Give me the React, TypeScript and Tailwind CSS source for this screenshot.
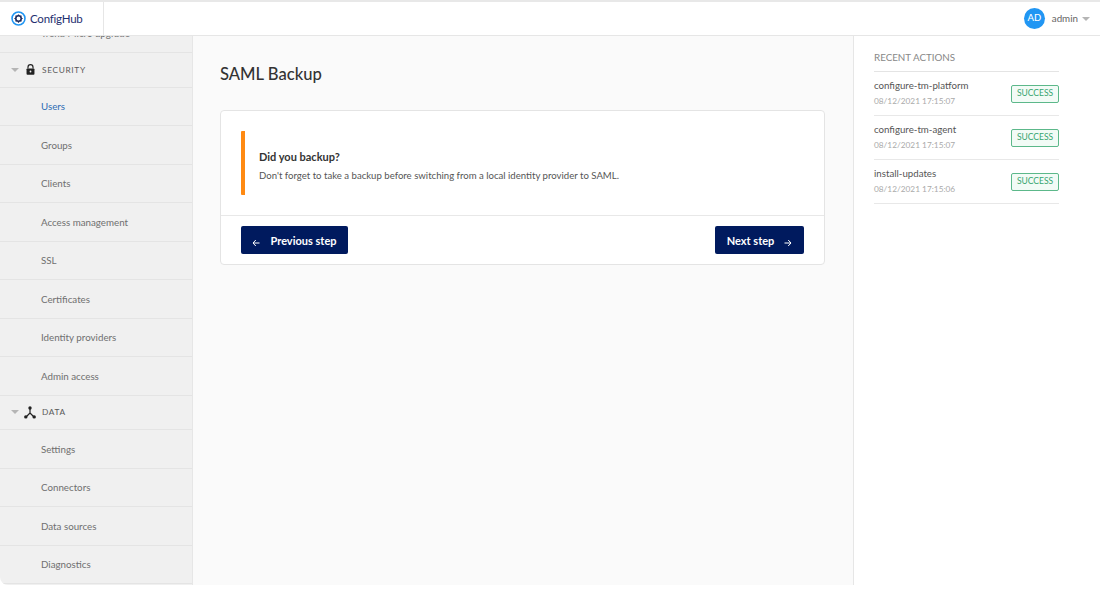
const securityItems = ['Users', 'Groups', 'Clients', 'Access management', 'SSL', 'Certificates', 'Identity providers', 'Admin access'];
const dataItems = ['Settings', 'Connectors', 'Data sources', 'Diagnostics'];

const actions = [
  { name: 'configure-tm-platform', time: '08/12/2021 17:15:07' },
  { name: 'configure-tm-agent', time: '08/12/2021 17:15:07' },
  { name: 'install-updates', time: '08/12/2021 17:15:06' },
];

function Caret() {
  return <span className="block h-0 w-0 border-x-[4px] border-t-[4px] border-x-transparent border-t-[#b5b5b5]" />;
}

function Logo() {
  return (
    <svg width="15" height="15" viewBox="0 0 16 16" className="shrink-0">
      <circle cx="8" cy="8" r="6.9" fill="none" stroke="#2196f3" strokeWidth="1.7" />
      <circle cx="8" cy="8" r="2.9" fill="none" stroke="#1c2b5e" strokeWidth="1.7" />
      <g stroke="#1c2b5e" strokeWidth="1.3">
        <path d="M8 3.6v1.6M8 10.8v1.6M3.6 8h1.6M10.8 8h1.6M4.9 4.9l1.1 1.1M10 10l1.1 1.1M4.9 11.1L6 10M10 6l1.1-1.1" />
      </g>
    </svg>
  );
}

function LockIcon() {
  return (
    <svg width="9" height="11" viewBox="0 0 10 12">
      <path d="M2.2 5V3.4a2.8 2.8 0 0 1 5.6 0V5" fill="none" stroke="#222" strokeWidth="1.3" />
      <rect x="0.6" y="4.8" width="8.8" height="7" rx="1" fill="#222" />
      <circle cx="5" cy="8.2" r="1" fill="#f0f0f0" />
    </svg>
  );
}

function NetworkIcon() {
  return (
    <svg width="12" height="13" viewBox="0 0 12 13">
      <path d="M6 2.5v4.5M6 7L2 11M6 7l4 4" fill="none" stroke="#222" strokeWidth="1.2" />
      <circle cx="6" cy="2" r="1.7" fill="#222" />
      <circle cx="1.8" cy="10.9" r="1.7" fill="#222" />
      <circle cx="10.2" cy="10.9" r="1.7" fill="#222" />
    </svg>
  );
}

function ArrowIcon({ left }: { left?: boolean }) {
  return (
    <svg width="8" height="8" viewBox="0 0 8 8" className="mt-[4px]">
      <path
        d={left ? 'M7.5 4H1M3.8 1L1 4l2.8 3' : 'M.5 4H7M4.2 1L7 4 4.2 7'}
        fill="none"
        stroke="#fff"
        strokeWidth="1"
      />
    </svg>
  );
}

function SectionRow({ label, icon }: { label: string; icon: React.ReactNode }) {
  return (
    <div className="flex h-[34.5px] items-center border-b border-[#e4e4e4] pl-[11px]">
      <Caret />
      <div className="ml-[5px] flex w-[12px] justify-center">{icon}</div>
      <span className="ml-[6px] text-[8.3px] tracking-[0.08em] text-[#5a5a5a]">{label}</span>
    </div>
  );
}

function NavRow({ label, active }: { label: string; active?: boolean }) {
  return (
    <div className={`flex h-[38.5px] shrink-0 items-center border-b border-[#e4e4e4] pt-[1px] pl-[41px] text-[9.75px] ${active ? 'text-[#2f6db5]' : 'text-[#6f6f6f]'}`}>
      {label}
    </div>
  );
}

export default function App() {
  return (
    <div className="h-[589px] w-[1100px] overflow-hidden bg-white font-['Lato',sans-serif]">
      <div className="flex h-[585px] flex-col overflow-hidden rounded-b-lg border-t-2 border-[#e8e8e8] bg-white">
        {/* Top bar */}
        <header className="z-10 flex h-[34px] shrink-0 items-center border-b border-[#e6e6e6] bg-white">
          <div className="flex h-full w-[104px] items-center gap-[4px] border-r border-[#e6e6e6] pl-[11px]">
            <Logo />
            <span className="text-[11.5px] tracking-[-0.02em] text-[#1f3070]">ConfigHub</span>
          </div>
          <div className="ml-auto flex items-center pr-[10px]">
            <div className="flex h-[21px] w-[21px] items-center justify-center rounded-full bg-[#2196f3] text-[9.5px] font-medium text-white">AD</div>
            <span className="ml-[7px] text-[9.8px] text-[#666]">admin</span>
            <span className="ml-[4px]"><Caret /></span>
          </div>
        </header>

        <div className="flex min-h-0 flex-1">
          {/* Sidebar */}
          <aside className="flex w-[193px] shrink-0 flex-col overflow-hidden border-r border-[#e6e6e6] bg-[#f0f0f0]">
            <div className="-mt-[21.5px]">
              <NavRow label="Trend Micro upgrade" />
              <SectionRow label="SECURITY" icon={<LockIcon />} />
              {securityItems.map((item) => (
                <NavRow key={item} label={item} active={item === 'Users'} />
              ))}
              <SectionRow label="DATA" icon={<NetworkIcon />} />
              {dataItems.map((item) => (
                <NavRow key={item} label={item} />
              ))}
            </div>
          </aside>

          {/* Main content */}
          <main className="flex-1 bg-[#fafafa] px-[27px] pt-[27px]">
            <h1 className="text-[16.6px] leading-[22px] font-medium text-[#333]">SAML Backup</h1>
            <div className="mt-[25px] h-[155px] w-[605px] rounded border border-[#e4e4e4] bg-white">
              <div className="h-[105px] border-b border-[#e8e8e8] pt-[20px] pl-[20px]">
                <div className="flex h-[64px] flex-col justify-center rounded-[1px] border-l-[4px] border-[#ff8a12] pt-[5px] pl-[14px]">
                  <div className="text-[11px] leading-[15px] font-bold text-[#333]">Did you backup?</div>
                  <div className="mt-[5px] text-[9.6px] leading-[14px] text-[#555]">Don't forget to take a backup before switching from a local identity provider to SAML.</div>
                </div>
              </div>
              <div className="flex justify-between px-[20px] pt-[10px]">
                <button className="flex h-[28px] w-[107px] items-center justify-center gap-[10px] rounded-[2px] bg-[#001a5e] pt-[2px] text-[11px] font-bold text-white">
                  <ArrowIcon left />
                  Previous step
                </button>
                <button className="flex h-[28px] w-[89px] items-center justify-center gap-[10px] rounded-[2px] bg-[#001a5e] pt-[2px] text-[11px] font-bold text-white">
                  Next step
                  <ArrowIcon />
                </button>
              </div>
            </div>
          </main>

          {/* Recent actions */}
          <aside className="w-[247px] shrink-0 border-l border-[#e6e6e6] bg-white pt-[14px] pr-[41px] pl-[20px]">
            <div className="border-b border-[#e4e4e4] pb-[7px] text-[9.8px] leading-[14px] text-[#888]">RECENT ACTIONS</div>
            {actions.map((action) => (
              <div key={action.name} className="flex h-[44px] items-center justify-between border-b border-[#e8e8e8]">
                <div className="-mt-[2px]">
                  <div className="text-[9.7px] leading-[14px] text-[#555]">{action.name}</div>
                  <div className="mt-[3px] text-[8.3px] leading-[12px] text-[#aaa]">{action.time}</div>
                </div>
                <div className="flex h-[18px] w-[48px] items-center justify-center rounded-[2px] border border-[#5cb88a] bg-[#f2fbf6] text-[8.5px] text-[#36a56f]">SUCCESS</div>
              </div>
            ))}
          </aside>
        </div>
      </div>
    </div>
  );
}
